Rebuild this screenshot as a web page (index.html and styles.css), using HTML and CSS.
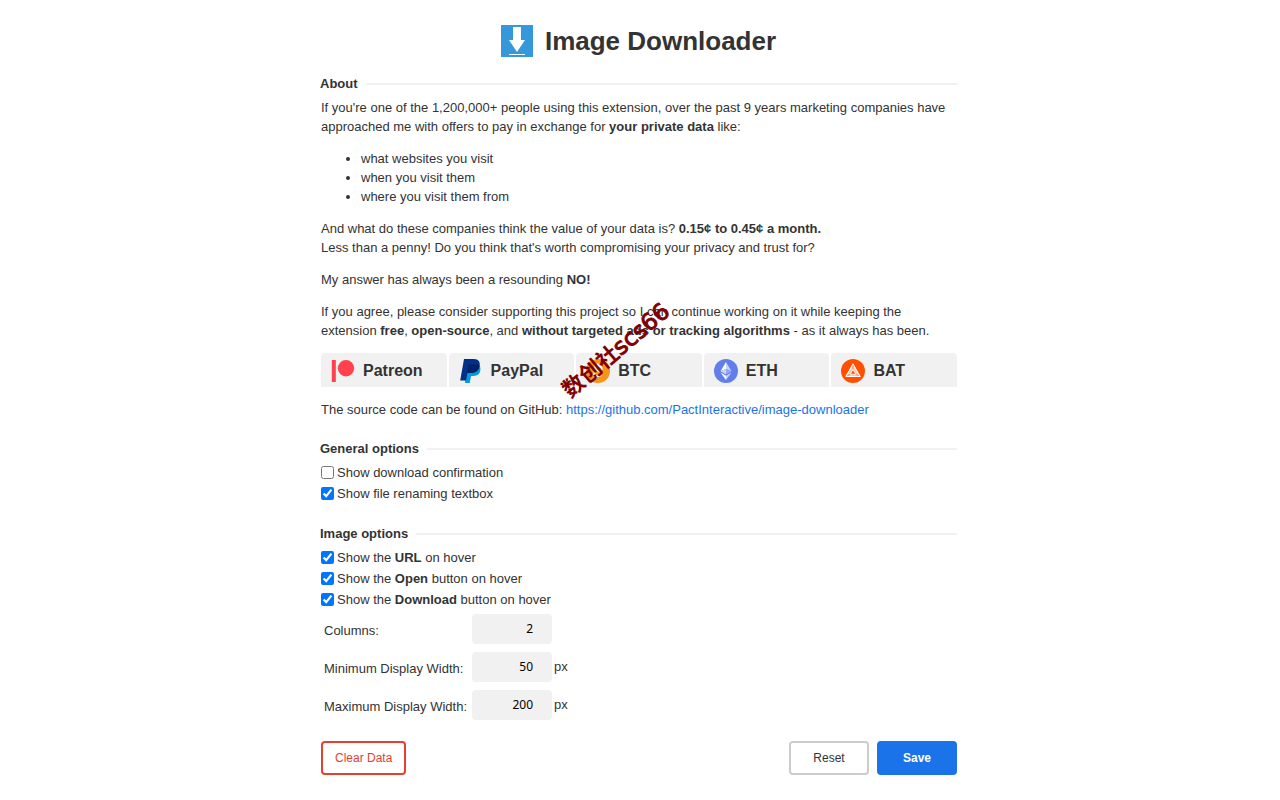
FILE: index.html
```html
<!DOCTYPE html>
<html lang="en">
<head>
<meta charset="utf-8">
<title>Image Downloader</title>
<link rel="stylesheet" href="styles.css">
</head>
<body>
<main class="page">
  <h1 class="title">
    <svg class="logo" viewBox="0 0 32 32" aria-hidden="true"><path fill="#3498db" d="M0 0h32v32H0z"/><path fill="#fff" d="M12 2h8v13h4l-8 12-8-12h4zM8 29h16v1H8z"/></svg>
    Image Downloader
  </h1>

  <section class="about">
    <h2 class="heading">About</h2>
    <div class="prose">
      <p>If you're one of the 1,200,000+ people using this extension, over the past 9 years marketing companies have approached me with offers to pay in exchange for <b>your private data</b> like:</p>
      <ul>
        <li>what websites you visit</li>
        <li>when you visit them</li>
        <li>where you visit them from</li>
      </ul>
      <p>And what do these companies think the value of your data is? <b>0.15¢ to 0.45¢ a month.</b><br>Less than a penny! Do you think that's worth compromising your privacy and trust for?</p>
      <p>My answer has always been a resounding <b>NO!</b></p>
      <p>If you agree, please consider supporting this project so I can continue working on it while keeping the extension <b>free</b>, <b>open-source</b>, and <b>without targeted ads or tracking algorithms</b> - as it always has been.</p>
      <div class="donate">
        <button type="button" class="tab">
          <svg viewBox="0 0 24 24" aria-hidden="true"><path fill="#ff424d" d="M.8 1h4v22h-4z"/><circle cx="15" cy="9.300" r="8.200" fill="#ff424d"/></svg>
          Patreon
        </button>
        <button type="button" class="tab">
          <svg viewBox="0 0 24 24" aria-hidden="true"><path fill="#009cde" d="M8 7h13c1.500 6-1 10-7 10h-2l-1.300 7H6z"/><path fill="#003087" d="M5 0h10c4.500 0 6.500 3 5.500 7-1 5-4.500 7-9 7H8.500L7 21.500H1.200z"/><path fill="#012169" d="M9.500 5.500h10.900c.5 5-3.500 8.500-8.900 8.500h-3z"/></svg>
          PayPal
        </button>
        <button type="button" class="tab">
          <svg viewBox="0 0 24 24" aria-hidden="true"><circle cx="12" cy="12" r="12" fill="#f7931a"/><path fill="none" stroke="#fff" stroke-width="2" d="m10 6-2 11M8 6.500l5 .8c4 .6 3.500 4.700-1 4.200l-3-.5M12 11.500c5 .8 3.500 6-.5 5.400L6.500 16M12 4.500l-.5 3M10 16.500l-.5 3"/></svg>
          BTC
        </button>
        <button type="button" class="tab">
          <svg viewBox="0 0 24 24" aria-hidden="true"><circle cx="12" cy="12" r="12" fill="#627eea"/><path fill="#fff" d="m12 3-5.500 9.200L12 10z"/><path fill="#c9d3f8" d="m12 3 5.500 9.200L12 10zM6.500 12.200 12 10v5.500z"/><path fill="#96a8f1" d="m17.500 12.200-5.500-2.200v5.500z"/><path fill="#fff" d="M6.500 13.500 12 16.700V21z"/><path fill="#c9d3f8" d="M17.500 13.500 12 16.700V21z"/></svg>
          ETH
        </button>
        <button type="button" class="tab">
          <svg viewBox="0 0 24 24" aria-hidden="true"><circle cx="12" cy="12" r="12" fill="#ff5000"/><path fill="#ffc7ad" d="M12 4.500 19.500 18h-15z"/><path fill="none" stroke="#fff" stroke-width="1.200" stroke-linejoin="round" d="M12 5.200 19 17.500H5z"/><path fill="#ff5000" stroke="#fff" stroke-width=".8" d="m12 10.500 2.800 4.700H9.200z"/><path stroke="#ff5000" stroke-width=".6" d="M12 6v4M6 17l3-1.600M18 17l-3-1.600"/></svg>
          BAT
        </button>
      </div>
      <p>The source code can be found on GitHub: <a href="https://github.com/PactInteractive/image-downloader">https://github.com/PactInteractive/image-downloader</a></p>
    </div>
  </section>

  <section class="options">
    <h2 class="heading">General options</h2>
    <label class="check"><input type="checkbox"><span>Show download confirmation</span></label>
    <label class="check"><input type="checkbox" checked><span>Show file renaming textbox</span></label>
  </section>

  <section class="options">
    <h2 class="heading">Image options</h2>
    <label class="check"><input type="checkbox" checked><span>Show the <b>URL</b> on hover</span></label>
    <label class="check"><input type="checkbox" checked><span>Show the <b>Open</b> button on hover</span></label>
    <label class="check"><input type="checkbox" checked><span>Show the <b>Download</b> button on hover</span></label>
    <div class="fields">
      <label for="columns">Columns:</label>
      <div class="value"><input id="columns" type="text" inputmode="numeric" value="2"></div>
      <label for="min-width">Minimum Display Width:</label>
      <div class="value"><input id="min-width" type="text" inputmode="numeric" value="50"><span>px</span></div>
      <label for="max-width">Maximum Display Width:</label>
      <div class="value"><input id="max-width" type="text" inputmode="numeric" value="200"><span>px</span></div>
    </div>
  </section>

  <div class="actions">
    <button type="button" class="button danger">Clear Data</button>
    <button type="button" class="button neutral">Reset</button>
    <button type="button" class="button primary">Save</button>
  </div>
  <div class="watermark"><b>数创社</b>scs66</div>
</main>
</body>
</html>
```
FILE: styles.css
```css
* { box-sizing: border-box; }
body {
  margin: 0;
  background: #fff;
  color: #333;
  font: 13px/19px "Liberation Sans", Arial, sans-serif;
}
.page {
  position: relative;
  max-width: 640px;
  margin: 0 auto;
  padding: 25px 3px 25px 0;
}
.title {
  display: flex;
  align-items: center;
  justify-content: center;
  gap: 12px;
  margin: 0 0 17px;
  font-size: 26px;
  line-height: 32px;
}
.logo { width: 32px; height: 32px; }
.heading {
  display: flex;
  align-items: center;
  gap: 8px;
  margin: 0;
  font-size: 13px;
  line-height: 19px;
}
.heading::after {
  content: "";
  flex: 1;
  height: 2px;
  background: #f1f1f1;
}
.prose {
  display: flex;
  flex-direction: column;
  gap: 13px;
  padding: 5px 0 0 1px;
}
.prose p, .prose ul { margin: 0; }
.prose a { color: #1a73e8; text-decoration: none; }
.donate {
  display: grid;
  grid-template-columns: repeat(5, 1fr);
  gap: 2px;
}
.tab {
  display: flex;
  align-items: center;
  gap: 8px;
  height: 34px;
  padding: 2px 10px 0;
  border: 0;
  border-radius: 4px 4px 0 0;
  background: #f1f1f1;
  color: #333;
  font: bold 16px/20px "Liberation Sans", Arial, sans-serif;
}
.tab svg { width: 24px; height: 24px; }
.options { margin-top: 20px; }
.options .heading { margin-bottom: 4px; }
.check {
  display: flex;
  align-items: center;
  gap: 3px;
  width: fit-content;
  height: 21px;
  padding-left: 1px;
}
.check input { width: 13px; height: 13px; margin: 0; accent-color: #0075ff; }
.fields {
  display: grid;
  grid-template-columns: max-content 1fr;
  align-items: center;
  gap: 8px 5px;
  padding: 4px 0 0 4px;
}
.fields label { padding-top: 2px; }
.value { display: flex; align-items: center; gap: 2px; }
.value span { padding-bottom: 2px; }
.value input {
  width: 80px;
  height: 30px;
  padding: 0 19px 2px 8px;
  border: 0;
  border-radius: 4px;
  background: #f1f1f1;
  color: #000;
  font: 12px/16px "Noto Sans", sans-serif;
  text-align: right;
}
.actions {
  display: flex;
  gap: 8px;
  padding: 21px 0 0 1px;
}
.button {
  min-width: 80px;
  height: 34px;
  padding: 0 12px;
  border: 2px solid;
  border-radius: 4px;
  background: #fff;
  font: 12px/16px "Liberation Sans", Arial, sans-serif;
}
.danger { margin-right: auto; border-color: #e8402f; color: #e8402f; }
.neutral { border-color: #ccc; color: #333; }
.primary { border-color: #1a73e8; background: #1a73e8; color: #fff; font-weight: bold; }
.watermark {
  position: absolute;
  top: 336px;
  left: 230px;
  color: #800000;
  font: 23px/28px "DejaVu Sans", "Noto Sans CJK SC", sans-serif;
  white-space: nowrap;
  -webkit-text-stroke: 1px #800000;
  transform: rotate(-40deg);
  pointer-events: none;
}
.watermark b { font-size: 22px; -webkit-text-stroke: 0; }
```
